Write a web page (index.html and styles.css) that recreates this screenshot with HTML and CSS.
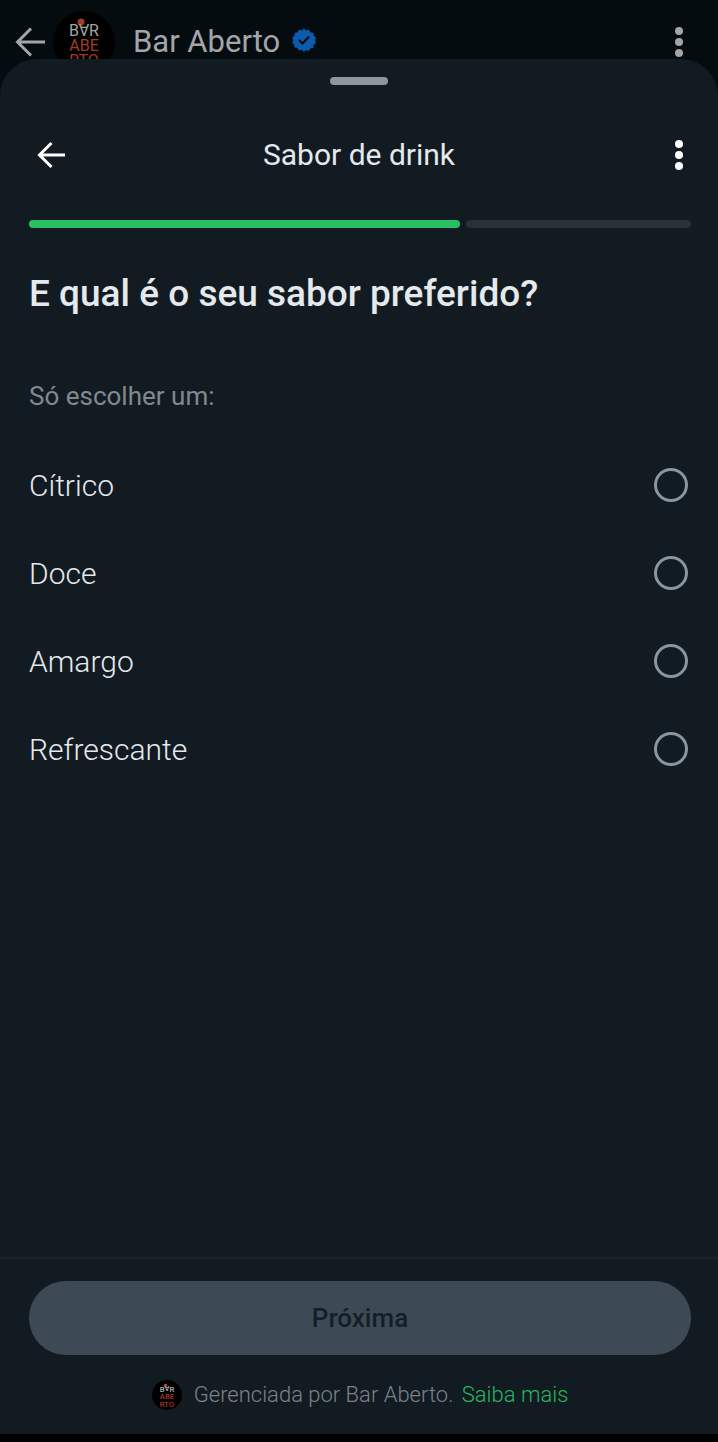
FILE: index.html
```html
<!DOCTYPE html>
<html lang="pt-BR">
<head>
<meta charset="utf-8">
<meta name="viewport" content="width=device-width, initial-scale=1">
<title>Sabor de drink</title>
<link rel="stylesheet" href="styles.css">
</head>
<body>
<header class="chat-bar">
  <button class="icon-button chat-back" aria-label="Voltar à conversa">
    <svg width="30" height="30" viewBox="0 0 30 30" fill="none" stroke="currentColor" stroke-width="3"><path d="M30 15H3M16 1.500L2.500 15L16 28.500"/></svg>
  </button>
  <svg class="logo avatar" viewBox="0 0 62 62" role="img" aria-label="Bar Aberto">
    <circle cx="31" cy="31" r="31"/>
    <circle class="logo-accent" cx="28" cy="11" r="3.500"/>
    <text class="logo-plain" x="21" y="25">B</text>
    <text class="logo-plain" x="-31" y="-13" transform="rotate(180)">A</text>
    <text class="logo-plain" x="41" y="25">R</text>
    <text class="logo-accent" x="31" y="40">ABE</text>
    <text class="logo-accent" x="31" y="55">RTO</text>
  </svg>
  <span class="chat-name">Bar Aberto</span>
  <svg class="verified" viewBox="0 0 24 24" role="img" aria-label="Verificado">
    <path fill="#0b5cad" stroke="#0b5cad" stroke-width="1.500" stroke-linejoin="round" d="M12 1l2.200 1.900 2.800-.8 1.400 2.600 2.900.4.2 2.900 2.400 1.700-1 2.700 1 2.700-2.400 1.700-.2 2.900-2.900.4-1.400 2.600-2.800-.8L12 23.400l-2.200-1.900-2.800.8-1.400-2.600-2.900-.4-.2-2.900L.6 15l1-2.700-1-2.700L3 7.900 3.200 5l2.400-.3L7 2.100l2.800.8z" transform="translate(.5 .5) scale(.95)"/>
    <path d="M7 12l3.500 3.500 6.500-7" fill="none" stroke="#050b10" stroke-width="2.200"/>
  </svg>
  <button class="icon-button chat-more" aria-label="Opções da conversa">
    <svg class="dots" viewBox="0 0 10 32"><circle cx="5" cy="5" r="4"/><circle cx="5" cy="16" r="4"/><circle cx="5" cy="27" r="4"/></svg>
  </button>
</header>

<main class="sheet">
  <div class="handle"></div>
  <div class="sheet-bar">
    <button class="icon-button" aria-label="Voltar">
      <svg width="28" height="28" viewBox="0 0 28 28" fill="none" stroke="currentColor" stroke-width="3"><path d="M28 14H3M14.500 2L2.500 14L14.500 26"/></svg>
    </button>
    <h1 class="sheet-title">Sabor de drink</h1>
    <button class="icon-button" aria-label="Mais opções">
      <svg class="dots" viewBox="0 0 10 32"><circle cx="5" cy="5" r="4"/><circle cx="5" cy="16" r="4"/><circle cx="5" cy="27" r="4"/></svg>
    </button>
  </div>
  <div class="progress" role="progressbar" aria-label="Progresso" aria-valuemin="0" aria-valuemax="100" aria-valuenow="66">
    <span class="progress-done"></span><span class="progress-left"></span>
  </div>
  <form class="question">
    <h2 class="question-title">E qual é o seu sabor preferido?</h2>
    <p class="hint" id="hint">Só escolher um:</p>
    <div class="options" role="radiogroup" aria-labelledby="hint">
      <label class="option">Cítrico<input type="radio" name="sabor" value="citrico"></label>
      <label class="option">Doce<input type="radio" name="sabor" value="doce"></label>
      <label class="option">Amargo<input type="radio" name="sabor" value="amargo"></label>
      <label class="option">Refrescante<input type="radio" name="sabor" value="refrescante"></label>
    </div>
  </form>
  <footer class="footer">
    <button class="next" disabled>Próxima</button>
    <p class="managed">
      <svg class="logo mini-logo" viewBox="0 0 62 62" aria-hidden="true">
        <circle cx="31" cy="31" r="31"/>
        <circle class="logo-accent" cx="28" cy="11" r="3.500"/>
        <text class="logo-plain" x="21" y="25">B</text>
        <text class="logo-plain" x="-31" y="-13" transform="rotate(180)">A</text>
        <text class="logo-plain" x="41" y="25">R</text>
        <text class="logo-accent" x="31" y="40">ABE</text>
        <text class="logo-accent" x="31" y="55">RTO</text>
      </svg>
      <span>Gerenciada por Bar Aberto. <a class="more-link" href="#">Saiba mais</a></span>
    </p>
  </footer>
</main>
</body>
</html>
```
FILE: styles.css
```css
* { box-sizing: border-box; }

body {
  margin: 0;
  min-height: 100vh;
  display: flex;
  flex-direction: column;
  padding-bottom: 8px;
  background: #000;
  color: #e4e9ee;
  font-family: Roboto, "Liberation Sans", sans-serif;
}

h1, h2, p { margin: 0; }

.logo {
  flex: none;
  font-size: 16px;
  font-weight: 400;
  text-anchor: middle;
}

.logo-accent { fill: var(--logo-red); }
.logo-plain { fill: var(--logo-white); }

.icon-button {
  display: flex;
  align-items: center;
  justify-content: center;
  width: 44px;
  height: 44px;
  padding: 0;
  border: 0;
  background: none;
  color: inherit;
}

.dots { width: 10px; height: 32px; fill: currentColor; }

.chat-bar {
  display: flex;
  align-items: center;
  height: 96px;
  padding: 0 17px 12px 8px;
  background: #050c10;
  color: #a3a5a8;
}

.avatar {
  --logo-red: #a33a22;
  --logo-white: #a5a5a5;
  width: 62px;
  height: 62px;
  margin-left: 1px;
}

.chat-name {
  margin-left: 18px;
  font-size: 31px;
  line-height: 40px;
}

.verified { width: 24px; height: 24px; margin: 0 0 4px 12px; }

.chat-more { margin-left: auto; }

.sheet {
  position: relative;
  flex: 1;
  display: flex;
  flex-direction: column;
  margin-top: -37px;
  padding-top: 18px;
  border-radius: 37px 37px 0 0;
  background: #131b22;
}

.handle {
  align-self: center;
  width: 58px;
  height: 8px;
  border-radius: 4px;
  background: #8f9699;
}

.sheet-bar {
  display: grid;
  grid-template-columns: 56px 1fr 56px;
  align-items: center;
  justify-items: end;
  height: 64px;
  margin-top: 38px;
  padding: 0 17px;
  color: #fff;
}

.sheet-title {
  justify-self: center;
  color: #e4e9ee;
  font-size: 30px;
  font-weight: 400;
  line-height: 36px;
}

.progress {
  display: flex;
  gap: 6px;
  margin: 33px 27px 0 29px;
}

.progress span { height: 8px; border-radius: 4px; }
.progress-done { flex: 21; background: #29c065; }
.progress-left { flex: 11; background: #2a3138; }

.question {
  flex: 1;
  padding: 44px 27px 24px 29px;
}

.question-title {
  font-size: 37px;
  font-weight: 500;
  line-height: 44px;
}

.hint {
  margin-top: 64px;
  color: #81898f;
  font-size: 26px;
  line-height: 32px;
}

.options { margin-top: 29px; }

.option {
  display: flex;
  align-items: center;
  justify-content: space-between;
  height: 88px;
  padding-right: 3px;
  font-size: 30px;
  font-weight: 300;
}

.option input {
  appearance: none;
  width: 34px;
  height: 34px;
  margin: 0;
  border: 3px solid #8996a0;
  border-radius: 50%;
}

.option input:checked { border-width: 10px; border-color: #29c065; }

.footer {
  padding: 22px 27px 24px 29px;
  border-top: 2px solid #1a2228;
}

.next {
  display: block;
  width: 100%;
  height: 74px;
  border: 0;
  border-radius: 37px;
  background: #3d4a55;
  color: #131f28;
  font: 500 26px/32px Roboto, "Liberation Sans", sans-serif;
}

.managed {
  display: flex;
  align-items: center;
  justify-content: center;
  gap: 12px;
  margin-top: 25px;
  color: #7b8389;
  font-size: 22px;
  font-weight: 300;
  line-height: 30px;
}

.mini-logo {
  --logo-red: #c8432b;
  --logo-white: #d5d5d5;
  width: 30px;
  height: 30px;
}

.more-link {
  margin-left: 3px;
  color: #29b560;
  text-decoration: none;
}
```
